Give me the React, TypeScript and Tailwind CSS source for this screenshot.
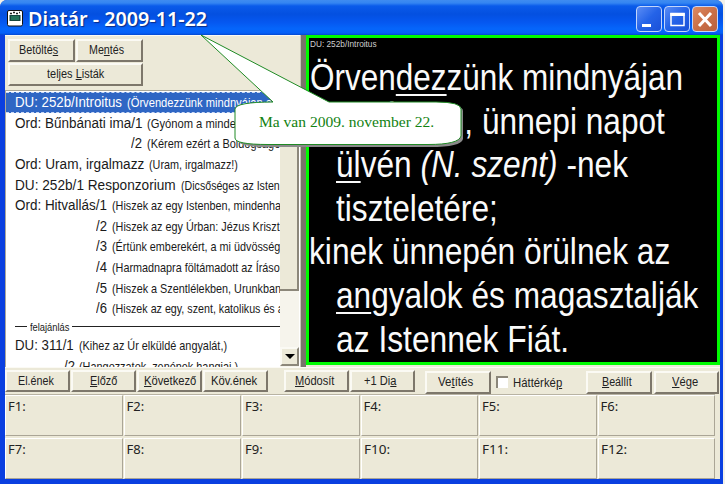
import { useLayoutEffect, useRef, useState, type ReactNode } from "react";

/** Renders one line of text condensed or stretched to an exact width. */
function Fit({ w, children, className = "" }: { w: number; children: ReactNode; className?: string }) {
  const ref = useRef<HTMLSpanElement>(null);
  const [scale, setScale] = useState(1);
  useLayoutEffect(() => {
    if (ref.current) setScale(w / ref.current.offsetWidth);
  }, [w]);
  return (
    <span className={`block shrink-0 whitespace-pre ${className}`} style={{ width: w }}>
      <span ref={ref} className="inline-block origin-left" style={{ transform: `scaleX(${scale})` }}>
        {children}
      </span>
    </span>
  );
}

const U = ({ children }: { children: ReactNode }) => (
  <span className="underline decoration-1 underline-offset-1">{children}</span>
);

function Btn({ w, className = "", children }: { w: number; className?: string; children: ReactNode }) {
  return (
    <button
      className={`flex shrink-0 items-center justify-center border-t-2 border-r-2 border-b-2 border-l-2 border-t-[#fbfaf4] border-r-[#7d776b] border-b-[#7d776b] border-l-[#fbfaf4] bg-[#ece9d8] font-['Liberation_Sans',sans-serif] text-[12.5px] leading-none text-[#222] ${className}`}
    >
      <Fit w={w}>{children}</Fit>
    </button>
  );
}

type Row = { pad: number; main: string; mw: number; gap: number; note: string; nw: number };

const rows: Row[] = [
  { pad: 9, main: "DU: 252b/Introitus", mw: 107, gap: 5, note: "(Örvendezzünk mindnyájan az", nw: 151 },
  { pad: 9, main: "Ord: Bűnbánati ima/1", mw: 127, gap: 5, note: "(Gyónom a mindenható", nw: 117 },
  { pad: 125, main: "/2", mw: 11, gap: 5, note: "(Kérem ezért a Boldogságo", nw: 133 },
  { pad: 9, main: "Ord: Uram, irgalmazz", mw: 129, gap: 5, note: "(Uram, irgalmazz!)", nw: 89 },
  { pad: 9, main: "DU: 252b/1 Responzorium", mw: 161, gap: 5, note: "(Dicsőséges az Isten", nw: 99 },
  { pad: 9, main: "Ord: Hitvallás/1", mw: 92, gap: 5, note: "(Hiszek az egy Istenben, mindenha", nw: 169 },
  { pad: 90, main: "/2", mw: 11, gap: 5, note: "(Hiszek az egy Úrban: Jézus Kriszt", nw: 168 },
  { pad: 90, main: "/3", mw: 11, gap: 5, note: "(Értünk emberekért, a mi üdvösség", nw: 168 },
  { pad: 90, main: "/4", mw: 11, gap: 5, note: "(Harmadnapra föltámadott az Írások", nw: 173 },
  { pad: 90, main: "/5", mw: 11, gap: 5, note: "(Hiszek a Szentlélekben, Urunkban", nw: 169 },
  { pad: 90, main: "/6", mw: 11, gap: 5, note: "(Hiszek az egy, szent, katolikus és a", nw: 172 },
];

const lastRows: Row[] = [
  { pad: 9, main: "DU: 311/1", mw: 59, gap: 5, note: "(Kihez az Úr elküldé angyalát,)", nw: 148 },
  { pad: 58, main: "/2", mw: 11, gap: 4, note: "(Hangozzatok, zenének hangjai,)", nw: 159 },
];

function ListRow({ row, selected = false }: { row: Row; selected?: boolean }) {
  return (
    <div
      className={`flex h-[20.6px] shrink-0 items-center overflow-hidden ${
        selected ? "border-y border-dashed border-[#c9d8f4] bg-[#2f66c4] text-white" : "text-[#1a1a1a]"
      }`}
      style={{ paddingLeft: row.pad }}
    >
      <Fit w={row.mw} className="text-[15.5px] leading-[20px]">{row.main}</Fit>
      <span className="shrink-0" style={{ width: row.gap }} />
      <Fit w={row.nw} className="pt-px text-[13px] leading-[19px]">{row.note}</Fit>
    </div>
  );
}

const Thick = ({ children }: { children: ReactNode }) => (
  <span className="underline decoration-2 underline-offset-[4px] [text-decoration-skip-ink:none]">{children}</span>
);

const slide: { pad: number; w: number; text: ReactNode }[] = [
  { pad: 1, w: 373, text: <>Örven<Thick>dez</Thick>zünk mindnyájan</> },
  { pad: 27, w: 329, text: <>az Úrban, ünnepi napot</> },
  { pad: 27, w: 292, text: <><Thick>ül</Thick>vén <i>(N. szent)</i> -nek</> },
  { pad: 27, w: 162, text: <>tiszteletére;</> },
  { pad: 0, w: 361, text: <>kinek ünnepén örülnek az</> },
  { pad: 27, w: 362, text: <><Thick>an</Thick>gyalok és magasztalják</> },
  { pad: 27, w: 233, text: <>az Istennek Fiát.</> },
];

const keys = ["F1:", "F2:", "F3:", "F4:", "F5:", "F6:", "F7:", "F8:", "F9:", "F10:", "F11:", "F12:"];

const winButton =
  "flex h-[26px] w-[26px] items-center justify-center rounded-[4px] border border-[#c3d6fb]";

export default function App() {
  return (
    <div className="relative h-[484px] w-[725px] overflow-hidden bg-[#f3f1e8] font-['Liberation_Sans',sans-serif]">
      <div className="flex h-[484px] w-[723px] flex-col overflow-hidden rounded-t-[7px] bg-[#0a3fe0]">
        <header className="flex h-[35px] shrink-0 items-center bg-[linear-gradient(180deg,#3f8cf0_0,#3485f2_3px,#0a5bea_6px,#0450e0_14px,#0557f0_22px,#0566fb_29px,#0560f8_33px,#0347cf_35px)] pt-[3px] pr-[5px] pl-[7px]">
          <svg width="16" height="17" viewBox="0 0 16 17" className="mb-[1px] shrink-0">
            <rect x=".5" y=".5" width="15" height="15.5" rx="1.5" fill="#fff" stroke="#111" />
            <path d="M3 3.5h2M6 2.5h2M9 3.5h2M12 2.5h1" stroke="#222" strokeWidth="1.5" />
            <rect x="2.5" y="5" width="11" height="6" fill="#15463c" />
            <path d="M4 7h8M4 9h8" stroke="#2e9a72" />
          </svg>
          <Fit w={179} className="ml-[5px] font-['Noto_Sans',sans-serif] text-[19.5px] leading-[26px] font-semibold text-white [text-shadow:1px_1px_1px_#0a2c86]">
            Diatár - 2009-11-22
          </Fit>
          <div className="ml-auto flex gap-[2px]">
            <div className={`${winButton} bg-[linear-gradient(135deg,#5b8df5,#2463e8_50%,#1a50d8)]`}>
              <svg width="24" height="24"><path d="M5 18.5h9" stroke="#fff" strokeWidth="3" /></svg>
            </div>
            <div className={`${winButton} bg-[linear-gradient(135deg,#5b8df5,#2463e8_50%,#1a50d8)]`}>
              <svg width="24" height="24" fill="none" stroke="#fff"><path d="M6 6.5h13v12H6z" strokeWidth="1.5" /><path d="M5.3 7.5h14.4" strokeWidth="3" /></svg>
            </div>
            <div className={`${winButton} bg-[linear-gradient(135deg,#dc8a62,#cb7048_50%,#b9613e)]`}>
              <svg width="24" height="24"><path d="m6 6 12 13M18 6 6 19" stroke="#fff" strokeWidth="3" /></svg>
            </div>
          </div>
        </header>

        <main className="mr-[3px] mb-[5px] ml-[5px] flex min-h-0 flex-1 flex-col bg-[#ece9d8]">
          <div className="flex h-[332px] shrink-0">
            <section className="flex w-[295px] shrink-0 flex-col border-t border-[#fbfaf4]">
              <div className="flex h-[54px] shrink-0 flex-col gap-px pt-[3px] pl-[3px]">
                <div className="flex gap-px">
                  <Btn w={39} className="h-[23px] w-[67px] pr-[6px]">Betölté<U>s</U></Btn>
                  <Btn w={35} className="h-[23px] w-[67px] pr-[6px]">Me<U>n</U>tés</Btn>
                </div>
                <Btn w={57} className="h-[23px] w-[135px]">teljes <U>L</U>isták</Btn>
              </div>
              <div className="flex min-h-0 flex-1 border-t border-l border-[#aca899] bg-white">
                <div className="flex w-[274px] shrink-0 flex-col overflow-hidden pt-[1px]">
                  {rows.map((r, i) => <ListRow key={i} row={r} selected={i === 0} />)}
                  <div className="flex h-[16.5px] shrink-0 items-center pl-[9px] text-[#1a1a1a]">
                    <span className="h-px w-[12px] bg-[#222]" />
                    <Fit w={39} className="mx-[3px] text-[11px] leading-[16px]">felajánlás</Fit>
                    <span className="h-px flex-1 bg-[#222]" />
                  </div>
                  {lastRows.map((r, i) => <ListRow key={i} row={r} />)}
                </div>
                <div className="flex w-[19px] shrink-0 flex-col bg-[#f6f4ec]">
                  <div className="h-[200px] border-t-2 border-r-2 border-b-2 border-t-[#fbfaf4] border-r-[#8c877a] border-b-[#8c877a] bg-[#ece9d8]" />
                  <div className="mt-auto mb-[1px] flex h-[19px] items-center justify-center border-2 border-t-[#fbfaf4] border-r-[#8c877a] border-b-[#8c877a] border-l-[#fbfaf4] bg-[#ece9d8]">
                    <svg width="10" height="5"><path d="M0 0h10L5 5z" fill="#000" /></svg>
                  </div>
                </div>
              </div>
            </section>
            <div className="w-[6px] shrink-0 border-r-[5px] border-[#79736a] bg-[#c9c5b9]" />
            <section className="mb-[2px] flex min-w-0 flex-1 flex-col overflow-hidden border-[3px] border-[#00fa00] bg-black text-[#fafafa]">
              <Fit w={67} className="ml-px text-[9px] leading-[12px] text-[#cfcfcf]">DU: 252b/Introitus</Fit>
              <div className="flex flex-col pt-[6px]">
                {slide.map((l, i) => (
                  <div key={i} className="h-[43.6px]" style={{ paddingLeft: l.pad }}>
                    <Fit w={l.w} className="text-[37.5px] leading-[43.6px]">{l.text}</Fit>
                  </div>
                ))}
              </div>
            </section>
          </div>

          <div className="flex h-[27px] shrink-0 border-t border-t-[#fbfaf4] pt-[2px]">
            <div className="flex gap-px">
              <Btn w={36} className="h-[22px] w-[65px] pr-[4px]">El.ének</Btn>
              <Btn w={27} className="h-[22px] w-[65px]"><U>E</U>lőző</Btn>
              <Btn w={52} className="h-[22px] w-[65px]"><U>K</U>övetkező</Btn>
              <Btn w={46} className="h-[22px] w-[65px] pr-[3px]">Köv.ének</Btn>
            </div>
            <div className="ml-[16px] flex gap-px">
              <Btn w={39} className="h-[22px] w-[65px] pr-[4px]"><U>M</U>ódosít</Btn>
              <Btn w={32} className="h-[22px] w-[65px] pr-[6px]">+1 Di<U>a</U></Btn>
            </div>
            <Btn w={35} className="mt-[1px] ml-[10px] h-[23px] w-[66px] pr-[6px]">Ve<U>t</U>ítés</Btn>
            <label className="mt-[1px] ml-[5px] flex h-[23px] w-[90px] items-center gap-[5px] text-[12.5px] leading-none text-[#222]">
              <span className="mb-[1px] h-[12px] w-[12px] border-t-2 border-l-2 border-[#8c877a] bg-white" />
              <Fit w={49} className="pt-px">Háttérké<U>p</U></Fit>
            </label>
            <Btn w={30} className="mt-[1px] h-[23px] w-[66px] pr-[4px]"><U>B</U>eállít</Btn>
            <Btn w={26} className="mt-[1px] ml-[2px] h-[23px] w-[65px] pr-[4px]"><U>V</U>ége</Btn>
          </div>

          <div className="grid min-h-0 w-[710px] flex-1 grid-cols-6 grid-rows-2 gap-x-px gap-y-[2px] border-t border-[#b8b3a3]">
            {keys.map((k) => (
              <div key={k} className="border-t border-r border-b border-l border-t-white border-r-[#aaa596] border-b-[#aaa596] border-l-white pt-px pl-[2px] font-['Noto_Sans',sans-serif] text-[13px] leading-[18px] text-[#222]">
                <Fit w={k.length === 3 ? 18 : 26}>{k}</Fit>
              </div>
            ))}
          </div>
        </main>
      </div>

      <div className="absolute top-[34px] left-[199px] h-[114px] w-[266px]">
        <svg width="266" height="114" viewBox="199 34 266 114" className="absolute inset-0">
          <path d="M238 110Q239 104 263 104H437Q463 104 463 111V139Q461 147 430 147H270Q238 147 238 140Z" fill="#8a8a8a" />
          <path d="M201 35 273 102Q236 102 235 109V138Q235 144.500 268 144.500H428Q459 144.500 461 136V109Q461 102 436 102H329Z" fill="#fff" stroke="#1f8a24" />
        </svg>
        <div className="relative pt-[79px] pl-[60px] font-['Liberation_Serif',serif] text-[15px] leading-[19px] text-[#128212]">
          <Fit w={175}>Ma van 2009. november 22.</Fit>
        </div>
      </div>
    </div>
  );
}
